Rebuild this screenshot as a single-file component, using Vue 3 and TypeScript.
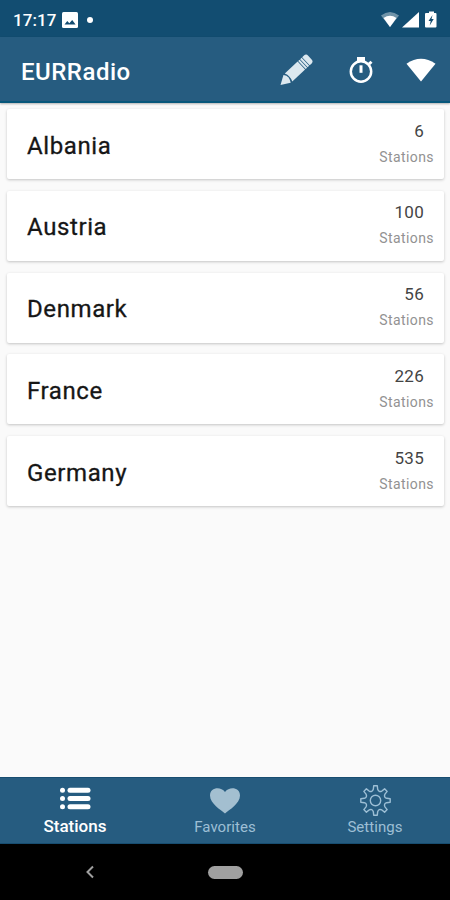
<script setup lang="ts">
interface Country {
  name: string
  stations: number
}

const countries: Country[] = [
  { name: 'Albania', stations: 6 },
  { name: 'Austria', stations: 100 },
  { name: 'Denmark', stations: 56 },
  { name: 'France', stations: 226 },
  { name: 'Germany', stations: 535 },
]

// Outline of the eight-toothed settings gear, centred on (16, 16).
function gearPath(): string {
  const teeth = 8
  const parts: string[] = []
  const point = (radius: number, degrees: number): string => {
    const a = (degrees * Math.PI) / 180
    return `${(16 + radius * Math.sin(a)).toFixed(2)} ${(16 - radius * Math.cos(a)).toFixed(2)}`
  }
  for (let i = 0; i < teeth; i++) {
    const c = (i * 360) / teeth
    parts.push(`${i === 0 ? 'M' : 'L'}${point(11.4, c - 11)}`)
    parts.push(`L${point(14.8, c - 7)}`)
    parts.push(`L${point(14.8, c + 7)}`)
    parts.push(`L${point(11.4, c + 11)}`)
    parts.push(`Q${point(8.6, c + 22.5)} ${point(11.4, c + 34)}`)
  }
  return parts.join('') + 'Z'
}

const gear = gearPath()
</script>

<template>
  <div class="screen">
    <div class="status">
      <span class="time">17:17</span>
      <svg class="photo" width="16" height="16" viewBox="0 0 16 16">
        <rect width="16" height="16" rx="1.5" fill="#fff" />
        <path d="M2.5 12.5 5.3 9l2 2.2L10.2 8l3.4 4.5z" fill="#124b70" />
      </svg>
      <span class="dot"></span>
      <svg class="signals" width="58" height="18" viewBox="0 0 58 18">
        <path d="M1 4.5Q10 -2.5 19 4.5L10 16z" fill="#fff" opacity=".4" />
        <path d="M3.5 7Q10 2.500 16.500 7L10 16z" fill="#fff" />
        <path d="M39 1v15.500H22z" fill="#fff" />
        <path d="M47 2h2V.5h5V2h1.500q1 0 1 1v12.500q0 1-1 1h-9.500q-1 0-1-1V3q0-1 1-1z" fill="#fff" />
        <path d="M52.500 4 48.500 10h2.200l-1 4.500 4-6.500h-2.200z" fill="#124b70" />
      </svg>
    </div>

    <header class="toolbar">
      <h1 class="title">EURRadio</h1>
      <svg class="pencil" width="34" height="32" viewBox="0 0 34 32">
        <g transform="translate(1.500 31) rotate(-43)" fill="#dce8ef">
          <path d="M0 0 9-5.300Q11.500-3 11 0T9 5.300z" />
          <path d="M11-5.500H28.500V5.500H11Q13.500 0 11-5.500z" />
          <path d="M29.300-5.500h2v11h-2zM32-5.500h2v11h-2z" />
          <path d="M34.700-5.500h2.500q3 0 3 3v5q0 3-3 3H34.700z" />
        </g>
      </svg>
      <svg class="stopwatch" width="26" height="28" viewBox="0 0 26 28">
        <rect x="9" y="1" width="8" height="4" fill="#fff" />
        <circle cx="13" cy="15.500" r="10.200" fill="none" stroke="#fff" stroke-width="2.500" />
        <path d="m20 7 2.500-2.300 2 2-2.400 2.400z" fill="#fff" />
        <rect x="11.500" y="9.300" width="3" height="7.500" fill="#fff" />
      </svg>
      <svg class="wifi" width="30" height="24" viewBox="0 0 30 24">
        <path d="M.5 5.800Q15-4.200 29.500 5.800L15 23.500z" fill="#fff" />
      </svg>
    </header>

    <main class="list">
      <article v-for="country in countries" :key="country.name" class="card">
        <h2 class="name">{{ country.name }}</h2>
        <div class="count">
          <span class="number">{{ country.stations }}</span>
          <span class="unit">Stations</span>
        </div>
      </article>
    </main>

    <nav class="tabs">
      <div class="tab active">
        <svg width="32" height="32" viewBox="0 0 32 32" fill="#fff">
          <circle cx="3.500" cy="6.200" r="2.500" />
          <circle cx="3.500" cy="14.500" r="2.500" />
          <circle cx="3.500" cy="22.800" r="2.500" />
          <rect x="8.500" y="3.700" width="23" height="5" rx="2.500" />
          <rect x="8.500" y="12" width="23" height="5" rx="2.500" />
          <rect x="8.500" y="20.300" width="23" height="5" rx="2.500" />
        </svg>
        <span class="label">Stations</span>
      </div>
      <div class="tab">
        <svg width="32" height="32" viewBox="0 0 32 32" fill="#a3bfd0">
          <path d="M16 29.500C12 26 1 19.500 1 11.500 1 3.500 11.500 2 16 8 20.500 2 31 3.500 31 11.500 31 19.500 20 26 16 29.500z" />
        </svg>
        <span class="label">Favorites</span>
      </div>
      <div class="tab">
        <svg width="32" height="32" viewBox="-0.500 -0.500 32 32" fill="none" stroke="#9dbfd5" stroke-width="1.400" stroke-linejoin="round">
          <path :d="gear" />
          <circle cx="16" cy="16" r="5.200" />
        </svg>
        <span class="label">Settings</span>
      </div>
    </nav>

    <div class="system">
      <svg class="back" width="10" height="14" viewBox="0 0 10 14">
        <path d="M8 1.500 2.500 7 8 12.500" fill="none" stroke="#a0a0a0" stroke-width="2" />
      </svg>
      <span class="home"></span>
    </div>
  </div>
</template>

<style>
body {
  margin: 0;
}
</style>

<style scoped>
.screen {
  display: flex;
  flex-direction: column;
  width: 450px;
  height: 900px;
  overflow: hidden;
  background: #fafafa;
  font-family: Roboto, "Liberation Sans", sans-serif;
}

.status {
  display: flex;
  align-items: center;
  box-sizing: border-box;
  height: 37px;
  flex: none;
  padding: 2px 12px 0 13px;
  background: #124d71;
}

.time {
  width: 44px;
  margin-right: 5px;
  color: #fff;
  font-size: 17px;
  font-weight: 500;
  letter-spacing: 0.1px;
}

.dot {
  width: 6px;
  height: 6px;
  margin-left: 9px;
  border-radius: 50%;
  background: #fff;
}

.signals {
  margin-left: auto;
}

.toolbar {
  display: flex;
  align-items: center;
  box-sizing: border-box;
  height: 66px;
  flex: none;
  padding: 2px 14px 0 21px;
  border-bottom: 2px solid #07577b;
  background: #265c80;
  box-shadow: 0 1px 2px rgba(0, 0, 0, 0.3);
}

.title {
  flex: 1;
  margin: 0;
  padding-top: 3px;
  color: #fff;
  font-size: 24px;
  font-weight: 500;
  line-height: 28px;
  letter-spacing: 0.5px;
}

.pencil {
  margin-right: 35px;
}

.stopwatch {
  margin-right: 32.5px;
}

.list {
  display: flex;
  flex: 1;
  flex-direction: column;
  gap: 11.75px;
  padding: 6px 6px 0 7px;
}

.card {
  display: flex;
  align-items: center;
  box-sizing: border-box;
  height: 70px;
  padding: 0 10px 0 20px;
  border-radius: 2px;
  background: #fff;
  box-shadow: 0 1px 3px rgba(0, 0, 0, 0.22);
}

.name {
  flex: 1;
  margin: 0;
  padding-top: 3px;
  color: #161616;
  font-size: 24px;
  font-weight: 400;
  line-height: 28px;
  letter-spacing: 0.6px;
  -webkit-text-stroke: 0.3px #161616;
}

.count {
  display: flex;
  flex-direction: column;
  align-items: flex-end;
  gap: 7px;
  padding-bottom: 1px;
}

.number {
  margin-right: 10px;
  color: #444;
  font-size: 17px;
  line-height: 19px;
  letter-spacing: 0.3px;
}

.unit {
  color: #929292;
  font-size: 14px;
  line-height: 18px;
  letter-spacing: 0.4px;
}

.tabs {
  display: grid;
  grid-template-columns: repeat(3, 1fr);
  box-sizing: border-box;
  height: 67px;
  flex: none;
  border-top: 1px solid #174d70;
  border-bottom: 1px solid #174d70;
  background: #265c80;
}

.tab {
  display: flex;
  flex-direction: column;
  align-items: center;
  padding-top: 6px;
}

.label {
  margin-top: 1px;
  color: #9dbfd5;
  font-size: 15px;
  line-height: 20px;
  letter-spacing: 0.05px;
}

.active .label {
  margin-top: 0;
  color: #fff;
  font-size: 17px;
  font-weight: 500;
  letter-spacing: 0;
}

.system {
  display: grid;
  grid-template-columns: 1fr 90px 1fr;
  align-items: center;
  justify-items: center;
  height: 56px;
  flex: none;
  background: #000;
}

.home {
  width: 35px;
  height: 13px;
  border-radius: 7px;
  background: #a0a0a0;
}
</style>
